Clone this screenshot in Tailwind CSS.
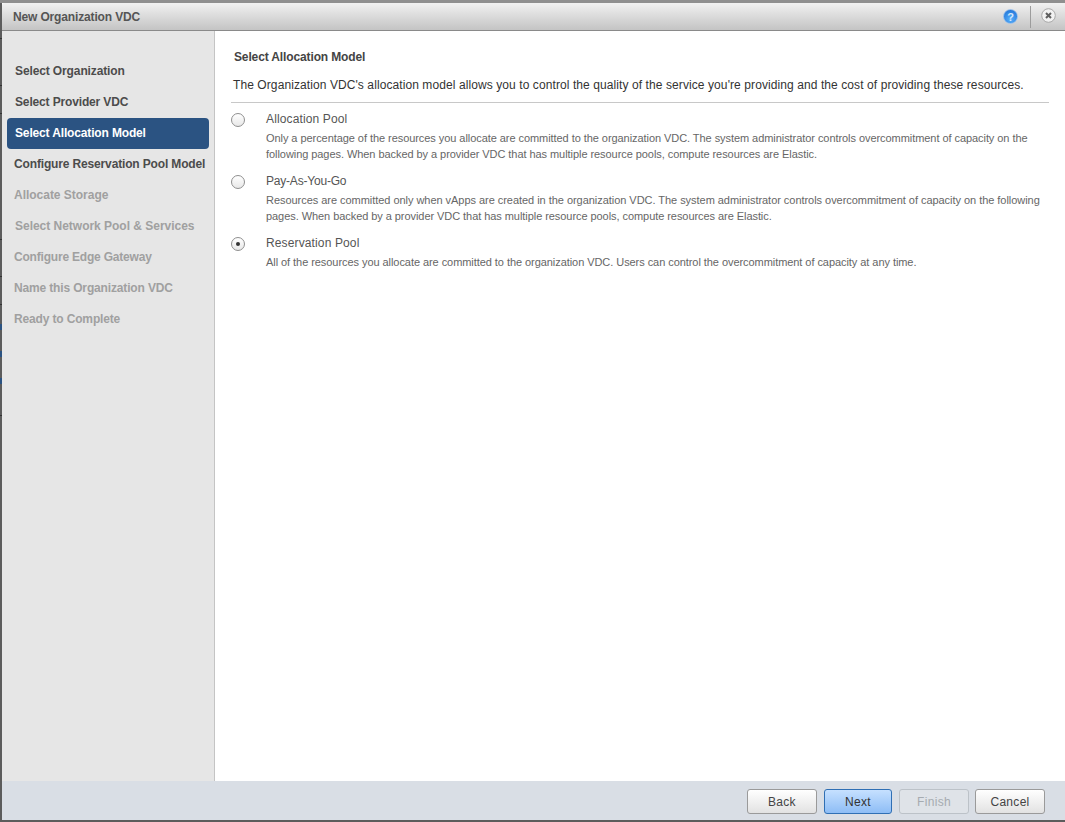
<!DOCTYPE html>
<html lang="en">

<head>
    <meta charset="UTF-8">
    <title>New Organization VDC</title>
    <script src="https://cdn.jsdelivr.net/npm/@tailwindcss/browser@4"></script>
</head>

<body class="bg-white font-['Liberation_Sans',Arial,sans-serif]">
    <div class="w-[1065px] h-[822px] flex flex-col bg-white border-l-2 border-b-2 border-[#5c5c5c] relative">
        <!-- page behind the dialog showing at its left edge -->
        <span class="absolute -left-[2px] top-[324px] w-[2px] h-[6px] bg-[#2b5382]"></span>
        <span class="absolute -left-[2px] top-[351px] w-[2px] h-[6px] bg-[#2b5382]"></span>
        <span class="absolute -left-[2px] top-[378px] w-[2px] h-[6px] bg-[#2b5382]"></span>
        <span class="absolute -left-[2px] top-[38px] w-[2px] h-px bg-[#333333]"></span>
        <span class="absolute -left-[2px] top-[85px] w-[2px] h-px bg-[#333333]"></span>
        <span class="absolute -left-[2px] top-[113px] w-[2px] h-px bg-[#333333]"></span>
        <span class="absolute -left-[2px] top-[239px] w-[2px] h-px bg-[#333333]"></span>
        <span class="absolute -left-[2px] top-[276px] w-[2px] h-px bg-[#333333]"></span>
        <span class="absolute -left-[2px] top-[304px] w-[2px] h-px bg-[#333333]"></span>
        <span class="absolute -left-[2px] top-[415px] w-[2px] h-px bg-[#333333]"></span>

        <div class="h-[3px] bg-[#8f8f8f] -ml-[2px] shrink-0"></div>

        <!-- title bar -->
        <div class="h-[28px] shrink-0 flex items-center justify-between bg-gradient-to-b from-[#f1f1f1] to-[#c4c4c4] border-b border-[#8a8a8a] pl-[11px] pr-[9px] rounded-tl-[3px]">
            <div class="text-[12px] font-bold text-[#555555] tracking-[-0.15px]">New Organization VDC</div>
            <div class="flex items-center">
                <svg width="15" height="15" viewBox="0 0 15 15" class="mr-[12px]">
                    <defs>
                        <radialGradient id="helpBall" cx="50%" cy="70%" r="70%">
                            <stop offset="0%" stop-color="#58b0fb" />
                            <stop offset="100%" stop-color="#2174d8" />
                        </radialGradient>
                    </defs>
                    <circle cx="7.5" cy="7.5" r="7" fill="url(#helpBall)" stroke="#a9c9ec" stroke-width="0.8" />
                    <text x="7.5" y="11.5" text-anchor="middle" font-size="11" font-weight="700" fill="#d5e8fb" font-family="Liberation Sans">?</text>
                </svg>
                <div class="w-px h-[22px] bg-[#9c9c9c] mr-[10px]"></div>
                <svg width="15" height="15" viewBox="0 0 15 15" class="-mt-[2px]">
                    <circle cx="7.5" cy="7.5" r="6.8" fill="#f2f2f2" stroke="#a8a8a8" />
                    <path d="M5 5l5 5M10 5l-5 5" stroke="#5f5f5f" stroke-width="2" />
                </svg>
            </div>
        </div>

        <div class="flex-1 flex min-h-0">
            <!-- steps -->
            <div class="w-[213px] shrink-0 bg-[#e6e6e6] border-r border-[#c4c4c4] pt-[24px] pl-[5px] pr-[5px] text-[12px] font-bold tracking-[-0.15px]">
                <div class="h-[31px] flex items-center pl-[8px] text-[#4c4c4c] tracking-[-0.12px]">Select Organization</div>
                <div class="h-[31px] flex items-center pl-[8px] text-[#4c4c4c]">Select Provider VDC</div>
                <div class="h-[31px] mt-[1px] -mb-[1px] pb-[2px] flex items-center pl-[8px] text-white bg-[#2b5382] rounded-[4px]">Select Allocation Model</div>
                <div class="h-[31px] flex items-center pl-[7px] text-[#4c4c4c] whitespace-nowrap">Configure Reservation Pool Model</div>
                <div class="h-[31px] flex items-center pl-[7px] text-[#a0a0a0] tracking-[-0.02px]">Allocate Storage</div>
                <div class="h-[31px] flex items-center pl-[8px] text-[#a0a0a0] tracking-[-0.02px]">Select Network Pool &amp; Services</div>
                <div class="h-[31px] flex items-center pl-[7px] text-[#a0a0a0] tracking-[-0.2px]">Configure Edge Gateway</div>
                <div class="h-[31px] flex items-center pl-[7px] text-[#a0a0a0]">Name this Organization VDC</div>
                <div class="h-[31px] flex items-center pl-[7px] text-[#a0a0a0]">Ready to Complete</div>
            </div>

            <!-- content -->
            <div class="flex-1 min-w-0 pt-[19px] pl-[16px] pr-[16px]">
                <div class="pl-[3px] text-[12px] font-bold text-[#444444] leading-[14px] tracking-[-0.13px]">Select Allocation Model</div>
                <div class="pl-[2px] mt-[13px] pb-[9px] text-[12px] text-[#333333] leading-[16px] tracking-[0.088px] border-b border-[#c8c8c8] whitespace-nowrap">The Organization VDC's allocation model allows you to control the quality of the service you're providing and the cost of providing these resources.</div>

                <div class="mt-[8px] flex">
                    <span class="w-[14px] h-[14px] mt-[2px] rounded-full border border-[#8f8f8f] bg-gradient-to-b from-[#ffffff] to-[#e8e8e8] shrink-0"></span>
                    <div class="ml-[21px]">
                        <div class="text-[12px] leading-[16px] text-[#555555] tracking-[0.13px]">Allocation Pool</div>
                        <div class="mt-[3px] text-[11px] leading-[16px] text-[#666666] tracking-[-0.06px] whitespace-nowrap">Only a percentage of the resources you allocate are committed to the organization VDC. The system administrator controls overcommitment of capacity on the<br>following pages. When backed by a provider VDC that has multiple resource pools, compute resources are Elastic.</div>
                    </div>
                </div>
                <div class="mt-[11px] flex">
                    <span class="w-[14px] h-[14px] mt-[2px] rounded-full border border-[#8f8f8f] bg-gradient-to-b from-[#ffffff] to-[#e8e8e8] shrink-0"></span>
                    <div class="ml-[21px]">
                        <div class="text-[12px] leading-[16px] text-[#555555] tracking-[-0.2px]">Pay-As-You-Go</div>
                        <div class="mt-[3px] text-[11px] leading-[16px] text-[#666666] tracking-[-0.06px] whitespace-nowrap"><span class="tracking-[-0.04px]">Resources are committed only when vApps are created in the organization VDC. The system administrator controls overcommitment of capacity on the following</span><br>pages. When backed by a provider VDC that has multiple resource pools, compute resources are Elastic.</div>
                    </div>
                </div>
                <div class="mt-[11px] flex">
                    <span class="w-[14px] h-[14px] mt-[2px] rounded-full border border-[#8f8f8f] bg-gradient-to-b from-[#ffffff] to-[#e8e8e8] shrink-0 flex items-center justify-center">
                        <span class="w-[4px] h-[4px] rounded-full bg-[#333333]"></span>
                    </span>
                    <div class="ml-[21px]">
                        <div class="text-[12px] leading-[16px] text-[#555555] tracking-[0.13px]">Reservation Pool</div>
                        <div class="mt-[3px] text-[11px] leading-[16px] text-[#666666] tracking-[-0.06px] whitespace-nowrap">All of the resources you allocate are committed to the organization VDC. Users can control the overcommitment of capacity at any time.</div>
                    </div>
                </div>
            </div>
        </div>

        <!-- footer -->
        <div class="h-[39px] shrink-0 bg-[#d9dee5] flex items-start justify-end pt-[8px] pr-[20px] text-[12px] tracking-[0.3px]">
            <button class="w-[70px] h-[25px] rounded-[3px] border border-[#9a9a9a] bg-gradient-to-b from-[#ffffff] to-[#e2e2e2] text-[#444444]">Back</button>
            <button class="ml-[7px] w-[68px] h-[25px] rounded-[3px] border border-[#2f6fb4] bg-gradient-to-b from-[#c6e0ff] to-[#8dbdf5] text-[#333333]">Next</button>
            <button class="ml-[7px] w-[70px] h-[25px] rounded-[3px] border border-[#bcc2c8] bg-[#dfe3e8] text-[#a6abb0]">Finish</button>
            <button class="ml-[6px] w-[70px] h-[25px] rounded-[3px] border border-[#9a9a9a] bg-gradient-to-b from-[#ffffff] to-[#e2e2e2] text-[#444444]">Cancel</button>
        </div>
    </div>
</body>

</html>
